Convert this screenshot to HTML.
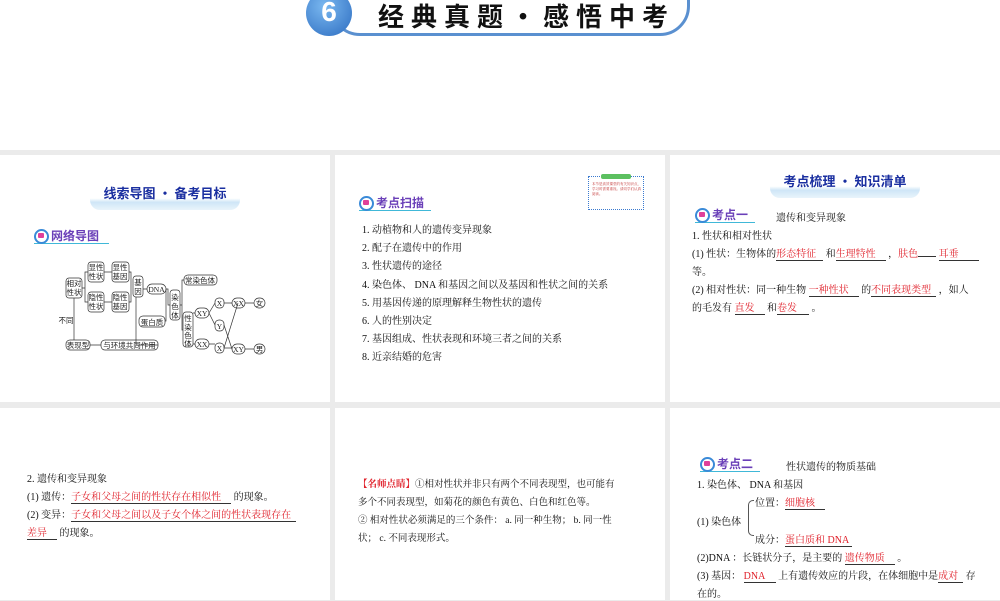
<!DOCTYPE html>
<html><head><meta charset="utf-8"><style>
*{margin:0;padding:0;box-sizing:border-box}
body{width:1000px;height:600px;position:relative;background:#ebebeb;overflow:hidden;font-family:"Liberation Serif","Noto Serif CJK SC","Noto Sans CJK SC",serif;color:#111}
.a{position:absolute}
.p{position:absolute;background:#fff}
.t{position:absolute;font-size:10px;white-space:nowrap;line-height:12px}
.r{color:#e0202a}
.u{display:inline-block;border-bottom:1px solid #333;line-height:11px}
.ttl{position:absolute;font-family:"Noto Sans CJK SC",sans-serif;font-weight:bold;color:#1a2fa0;font-size:13px;text-align:center;width:150px;height:26px;line-height:18px;background:linear-gradient(to bottom,rgba(255,255,255,0) 55%,#cfe6f7 70%,#e9f4fb 100%);border-radius:10px}
.tag{position:absolute;font-family:"Noto Sans CJK SC",sans-serif;font-weight:bold;color:#6a3fb8;font-size:12px;padding-left:17px;height:15px;line-height:13px;border-bottom:1.5px solid #40b8d8}
.tag:before{content:"";position:absolute;left:0;top:0;width:11px;height:11px;border:2px solid #3a8ad8;border-radius:50%;background:#fff}
.tag:after{content:"";position:absolute;left:4px;top:4px;width:6px;height:5px;background:#e0409a;border-radius:1px}
</style></head><body>
<div class="p" style="left:0;top:0;width:1000px;height:150px"></div>
<!-- header banner -->
<div class="a" style="left:330px;top:-30px;width:360px;height:66px;border:3px solid #5a90d0;border-radius:30px;background:#fff"></div>
<div class="a" style="left:306px;top:-10px;width:46px;height:46px;border-radius:50%;background:radial-gradient(circle at 40% 35%,#7ab8f0,#2c6cc0);color:#fff;font:bold 28px 'Liberation Sans',sans-serif;text-align:center;line-height:44px">6</div>
<div class="a" style="left:378px;top:-3px;font:bold 26px 'Noto Sans CJK SC',sans-serif;letter-spacing:7px;color:#111;white-space:nowrap">经典真题·感悟中考</div>

<div class="p" style="left:0;top:155px;width:330px;height:247px"></div>
<div class="p" style="left:335px;top:155px;width:330px;height:247px"></div>
<div class="p" style="left:670px;top:155px;width:330px;height:247px"></div>
<div class="p" style="left:0;top:408px;width:330px;height:192px"></div>
<div class="p" style="left:335px;top:408px;width:330px;height:192px"></div>
<div class="p" style="left:670px;top:408px;width:330px;height:192px"></div>

<!-- panel 1 -->
<div class="ttl" style="left:90px;top:184px">线索导图 · 备考目标</div>
<div class="tag" style="left:34px;top:229px;width:75px">网络导图</div>
<svg class="a" style="left:0;top:0" width="330" height="400" font-size="7.5" font-family="Noto Sans CJK SC,sans-serif" fill="none" stroke="#333" stroke-width="0.7">
<g>
<rect x="66" y="278" width="16" height="20" rx="3"/><rect x="88" y="262" width="16" height="20" rx="3"/><rect x="88" y="292" width="16" height="20" rx="3"/>
<rect x="112" y="262" width="17" height="20" rx="3"/><rect x="112" y="292" width="17" height="20" rx="3"/><rect x="133" y="276" width="10" height="21" rx="3"/>
<rect x="147" y="284" width="19" height="10" rx="5"/><rect x="139" y="316" width="26" height="11" rx="4"/><rect x="170" y="290" width="10" height="30" rx="3"/>
<rect x="184" y="275" width="33" height="10" rx="4"/><rect x="183" y="312" width="10" height="35" rx="3"/>
<rect x="195" y="308" width="14" height="10" rx="5"/><rect x="195" y="339" width="14" height="10" rx="5"/>
<rect x="215" y="298" width="9" height="10" rx="4"/><rect x="215" y="320" width="9" height="11" rx="4"/><rect x="215" y="343" width="9" height="10" rx="4"/>
<rect x="232" y="298" width="13" height="10" rx="5"/><rect x="254" y="298" width="11" height="10" rx="5"/>
<rect x="232" y="344" width="13" height="10" rx="5"/><rect x="254" y="344" width="11" height="10" rx="5"/>
<rect x="66" y="340" width="24" height="10" rx="4"/><rect x="101" y="340" width="57" height="10" rx="4"/>
<path d="M112 272H104M112 302H104M82 288H85V272H88M85 288V302H88M129 272H131V302H129M143 289H147M166 289H168V305H170M166 289V321H165M180 305H182V280H184M182 305V330H183M193 313H195M193 344H195M209 313L215 303M209 313L215 325M209 344H215M224 303H232M245 303H254M224 325L232 349M224 348H232M245 349H254M224 348L238 303M136 297V345H158M101 345H90M74 340V298"/>
</g>
<g fill="#222" stroke="none" text-anchor="middle">
<text x="74" y="286">相对</text><text x="74" y="295">性状</text>
<text x="96" y="270">显性</text><text x="96" y="279">性状</text><text x="96" y="300">隐性</text><text x="96" y="309">性状</text>
<text x="120" y="270">显性</text><text x="120" y="279">基因</text><text x="120" y="300">隐性</text><text x="120" y="309">基因</text>
<text x="138" y="285">基</text><text x="138" y="294">因</text><text x="156.5" y="292" font-family="Liberation Serif">DNA</text><text x="152" y="325">蛋白质</text>
<text x="175" y="300">染</text><text x="175" y="309">色</text><text x="175" y="318">体</text>
<text x="200" y="283">常染色体</text>
<text x="188" y="321">性</text><text x="188" y="330">染</text><text x="188" y="338">色</text><text x="188" y="346">体</text>
<text x="202" y="316" font-family="Liberation Serif">XY</text><text x="202" y="347" font-family="Liberation Serif">XX</text>
<text x="219.5" y="306" font-family="Liberation Serif">X</text><text x="219.5" y="329" font-family="Liberation Serif">Y</text><text x="219.5" y="351" font-family="Liberation Serif">X</text>
<text x="238.5" y="306" font-family="Liberation Serif">XX</text><text x="259.5" y="306">女</text>
<text x="238.5" y="352" font-family="Liberation Serif">XY</text><text x="259.5" y="352">男</text>
<text x="78" y="348">表现型</text><text x="129.5" y="348">与环境共同作用</text><text x="66" y="323">不同</text>
</g></svg>

<!-- panel 2 -->
<div class="tag" style="left:359px;top:196px;width:72px">考点扫描</div>
<div class="a" style="left:588px;top:176px;width:56px;height:34px;border:1px dotted #3a7ad0"></div>
<div class="a" style="left:601px;top:174px;width:30px;height:5px;background:#5cc060;border-radius:2px"></div>
<div class="a" style="left:592px;top:182px;width:50px;font-size:3.5px;line-height:5px;color:#c03030">本节是高效课堂的有关知识点，学习时需要重视。请同学们认真阅读。</div>
<div class="t" style="left:362px;top:222px;line-height:18.2px">1. 动植物和人的遗传变异现象<br>2. 配子在遗传中的作用<br>3. 性状遗传的途径<br>4. 染色体、 DNA 和基因之间以及基因和性状之间的关系<br>5. 用基因传递的原理解释生物性状的遗传<br>6. 人的性别决定<br>7. 基因组成、性状表现和环境三者之间的关系<br>8. 近亲结婚的危害</div>

<!-- panel 3 -->
<div class="ttl" style="left:770px;top:172px">考点梳理 · 知识清单</div>
<div class="tag" style="left:695px;top:208px;width:60px">考点一</div>
<div class="t" style="left:776px;top:213px">遗传和变异现象</div>
<div class="t" style="left:692px;top:231px">1. 性状和相对性状</div>
<div class="t" style="left:692px;top:249px">(1) 性状：生物体的<span class="u r" style="width:47px">形态特征</span> 和<span class="u r" style="width:50px">生理特性</span> ，<span class="r">肤色</span><span class="u r" style="width:18px"></span> <span class="u r" style="width:40px">耳垂</span></div>
<div class="t" style="left:692px;top:267px">等。</div>
<div class="t" style="left:692px;top:285px">(2) 相对性状：同一种生物 <span class="u r" style="width:50px">一种性状</span> 的<span class="u r" style="width:65px">不同表现类型</span> ，如人</div>
<div class="t" style="left:692px;top:303px">的毛发有 <span class="u r" style="width:30px">直发</span> 和<span class="u r" style="width:32px">卷发</span> 。</div>

<!-- panel 4 -->
<div class="t" style="left:27px;top:474px">2. 遗传和变异现象</div>
<div class="t" style="left:27px;top:492px">(1) 遗传：<span class="u r" style="width:160px">子女和父母之间的性状存在相似性</span> 的现象。</div>
<div class="t" style="left:27px;top:510px">(2) 变异：<span class="u r" style="width:225px">子女和父母之间以及子女个体之间的性状表现存在</span></div>
<div class="t" style="left:27px;top:528px"><span class="u r" style="width:30px">差异</span> 的现象。</div>

<!-- panel 5 -->
<div class="t" style="left:358px;top:476px;font-size:9.5px;line-height:18px"><span style="color:#e0202a;font-weight:bold">【名师点睛】</span>①相对性状并非只有两个不同表现型，也可能有<br>多个不同表现型，如菊花的颜色有黄色、白色和红色等。<br>② 相对性状必须满足的三个条件： a. 同一种生物； b. 同一性<br>状； c. 不同表现形式。</div>

<!-- panel 6 -->
<div class="tag" style="left:700px;top:457px;width:60px">考点二</div>
<div class="t" style="left:786px;top:462px">性状遗传的物质基础</div>
<div class="t" style="left:697px;top:480px">1. 染色体、 DNA 和基因</div>
<div class="a" style="left:748px;top:500px;width:6px;height:36px;border:1px solid #555;border-right:none;border-radius:5px 0 0 5px"></div>
<div class="t" style="left:755px;top:498px">位置：<span class="u r" style="width:40px">细胞核</span></div>
<div class="t" style="left:697px;top:517px">(1) 染色体</div>
<div class="t" style="left:755px;top:535px">成分：<span class="u r" style="width:67px">蛋白质和 DNA</span></div>
<div class="t" style="left:697px;top:553px">(2)DNA ：长链状分子，是主要的 <span class="u r" style="width:50px">遗传物质</span> 。</div>
<div class="t" style="left:697px;top:571px">(3) 基因： <span class="u r" style="width:32px">DNA</span> 上有遗传效应的片段，在体细胞中是<span class="u r" style="width:25px">成对</span> 存</div>
<div class="t" style="left:697px;top:589px">在的。</div>
</body></html>
